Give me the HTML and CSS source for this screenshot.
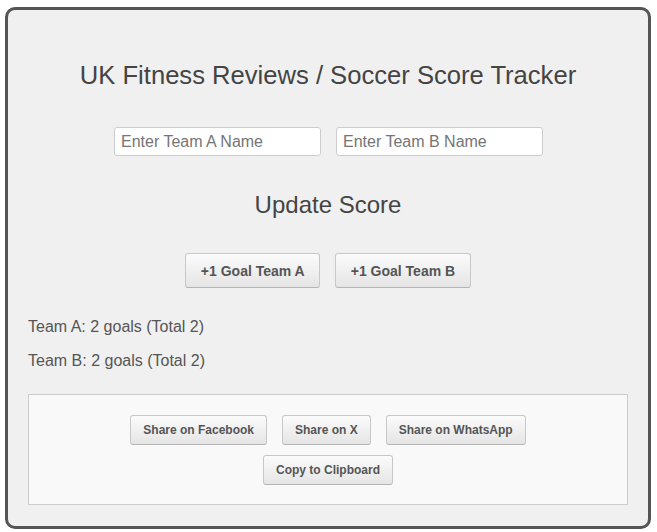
FILE: index.html
```html
<!DOCTYPE html>
<html lang="en">
<head>
<meta charset="utf-8">
<title>Soccer Score Tracker</title>
<link rel="stylesheet" href="styles.css">
</head>
<body>
<div class="tracker">
  <h1 class="title">UK Fitness Reviews / Soccer Score Tracker</h1>
  <div class="teams">
    <input class="team-input" type="text" placeholder="Enter Team A Name">
    <input class="team-input" type="text" placeholder="Enter Team B Name">
  </div>
  <h2 class="subtitle">Update Score</h2>
  <div class="goal-buttons">
    <button class="btn btn-goal" type="button">+1 Goal Team A</button>
    <button class="btn btn-goal" type="button">+1 Goal Team B</button>
  </div>
  <p class="score">Team A: 2 goals (Total 2)</p>
  <p class="score score-b">Team B: 2 goals (Total 2)</p>
  <div class="share">
    <div class="share-row">
      <button class="btn btn-share btn-fb" type="button">Share on Facebook</button>
      <button class="btn btn-share btn-x" type="button">Share on X</button>
      <button class="btn btn-share btn-wa" type="button">Share on WhatsApp</button>
    </div>
    <div class="share-row">
      <button class="btn btn-share btn-copy" type="button">Copy to Clipboard</button>
    </div>
  </div>
</div>
</body>
</html>
```
FILE: styles.css
```css
html, body {
  margin: 0;
  padding: 0;
  background: #ffffff;
}

body {
  font-family: "Liberation Sans", Arial, sans-serif;
  color: #555555;
}

.tracker {
  box-sizing: border-box;
  width: 646px;
  height: 522px;
  margin: 7px 0 0 5px;
  padding: 0 20px;
  background: #f0f0f0;
  border: 3px solid #555555;
  border-radius: 10px;
  overflow: hidden;
}

.title {
  margin: 50px 0 0;
  font-size: 25.6px;
  line-height: 30px;
  font-weight: normal;
  color: #444444;
  text-align: center;
}

.teams {
  display: flex;
  justify-content: center;
  gap: 15px;
  margin-top: 37px;
  padding-left: 1px;
}

.team-input {
  box-sizing: border-box;
  width: 207px;
  height: 29px;
  margin: 0;
  padding: 0 6px;
  font-family: "Liberation Sans", Arial, sans-serif;
  font-size: 16px;
  color: #555555;
  background: #ffffff;
  border: 1px solid #cccccc;
  border-radius: 3px;
  outline: none;
}

.team-input::placeholder {
  color: #757575;
}

.subtitle {
  margin: 35px 0 0;
  font-size: 24px;
  line-height: 28px;
  font-weight: normal;
  color: #444444;
  text-align: center;
}

.goal-buttons {
  display: flex;
  justify-content: center;
  gap: 15px;
  margin-top: 34px;
}

.btn {
  box-sizing: border-box;
  margin: 0;
  font-family: "Liberation Sans", Arial, sans-serif;
  font-weight: bold;
  color: #555555;
  background: linear-gradient(to bottom, #fbfbfb, #e5e5e5);
  border: 1px solid #c8c8c8;
  border-bottom-color: #b4b4b4;
  border-radius: 3px;
  cursor: pointer;
}

.btn-goal {
  height: 35px;
  padding: 0 14.5px;
  font-size: 14px;
  line-height: 16px;
}

.score {
  margin: 30px 0 0;
  font-size: 16px;
  line-height: 18px;
  color: #555555;
}

.score-b {
  margin-top: 15.5px;
}

.share {
  margin-top: 24.5px;
  padding: 20px 20px 19px;
  background: #f9f9f9;
  border: 1px solid #cccccc;
  display: flex;
  flex-direction: column;
  gap: 10px;
}

.share-row {
  display: flex;
  justify-content: center;
  gap: 15px;
}

.btn-share {
  height: 30px;
  padding: 0 12px;
  font-size: 12px;
  line-height: 14px;
}
```
